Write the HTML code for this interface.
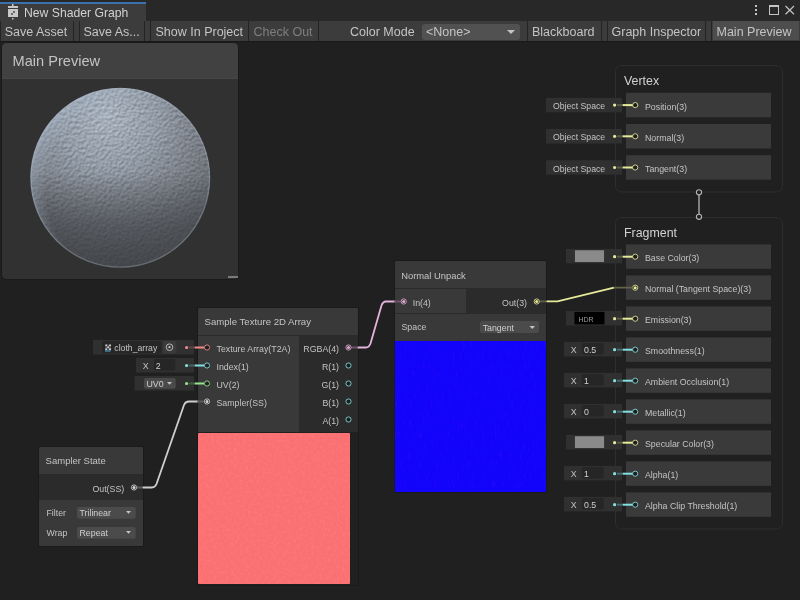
<!DOCTYPE html>
<html><head><meta charset="utf-8"><title>Shader Graph</title>
<style>
html,body{margin:0;padding:0;background:#202020;width:800px;height:600px;overflow:hidden}
svg{display:block;font-family:"Liberation Sans", sans-serif;will-change:transform}
</style></head><body>
<svg width="800" height="600" viewBox="0 0 800 600">
<rect x="0" y="0" width="800" height="600" fill="#202020"/>
<rect x="0" y="0" width="800" height="21" fill="#282828" />
<rect x="0" y="2" width="146" height="19" fill="#3c3c3c" />
<rect x="0" y="2" width="146" height="2" fill="#3a72b0" />
<rect x="12" y="4" width="1.5" height="2" fill="#c8c8c8" />
<rect x="8" y="6" width="10" height="2" fill="#c8c8c8" />
<rect x="8" y="9" width="10" height="8" fill="#c8c8c8" />
<rect x="11.25" y="13.25" width="1.5" height="1.5" fill="#222" />
<rect x="13.25" y="11.25" width="1.5" height="1.5" fill="#222" />
<rect x="12" y="18" width="1.5" height="1.5" fill="#c8c8c8" />
<text x="24" y="16.5" font-size="12.2" fill="#d2d2d2" text-anchor="start" >New Shader Graph</text>
<rect x="755" y="5" width="2" height="2" fill="#c4c4c4" />
<rect x="755" y="9" width="2" height="2" fill="#c4c4c4" />
<rect x="755" y="13" width="2" height="2" fill="#c4c4c4" />
<rect x="769.5" y="5.5" width="9" height="9" fill="none" stroke="#c4c4c4" stroke-width="1"/>
<rect x="769" y="5" width="10" height="2" fill="#c4c4c4" />
<path d="M785.5 6 L794 14.3 M794 6 L785.5 14.3" stroke="#c4c4c4" stroke-width="1.2"/>
<rect x="0" y="21" width="800" height="20" fill="#3c3c3c" />
<rect x="0" y="41" width="800" height="1" fill="#191919" />
<rect x="0" y="21" width="1" height="20" fill="#242424" />
<rect x="73" y="21" width="1" height="20" fill="#242424" />
<rect x="79" y="21" width="1" height="20" fill="#242424" />
<rect x="144" y="21" width="1" height="20" fill="#242424" />
<rect x="150" y="21" width="1" height="20" fill="#242424" />
<rect x="248" y="21" width="1" height="20" fill="#242424" />
<rect x="318" y="21" width="1" height="20" fill="#242424" />
<rect x="527" y="21" width="1" height="20" fill="#242424" />
<rect x="601" y="21" width="1" height="20" fill="#242424" />
<rect x="607" y="21" width="1" height="20" fill="#242424" />
<rect x="705" y="21" width="1" height="20" fill="#242424" />
<rect x="711" y="21" width="1" height="20" fill="#242424" />
<rect x="713" y="21" width="86" height="19" fill="#4d4d4d" />
<text x="4.75" y="36" font-size="12.5" fill="#c4c4c4" text-anchor="start" >Save Asset</text>
<text x="83.5" y="36" font-size="12.5" fill="#c4c4c4" text-anchor="start" >Save As...</text>
<text x="155.5" y="36" font-size="12.5" fill="#c4c4c4" text-anchor="start" >Show In Project</text>
<text x="253.5" y="36" font-size="12.5" fill="#7f7f7f" text-anchor="start" >Check Out</text>
<text x="350" y="36" font-size="12.5" fill="#c4c4c4" text-anchor="start" >Color Mode</text>
<rect x="422" y="24" width="98" height="16" fill="#515151" rx="3" />
<text x="426" y="36" font-size="12.5" fill="#c4c4c4" text-anchor="start" >&lt;None&gt;</text>
<path d="M507 30 L515 30 L511 34 Z" fill="#c4c4c4"/>
<text x="532" y="36" font-size="12.5" fill="#c4c4c4" text-anchor="start" >Blackboard</text>
<text x="611.5" y="36" font-size="12.5" fill="#c4c4c4" text-anchor="start" >Graph Inspector</text>
<text x="716.5" y="36" font-size="12.5" fill="#c4c4c4" text-anchor="start" >Main Preview</text>
<rect x="1.5" y="42.5" width="237" height="237" rx="5" fill="#313131" stroke="#1a1a1a" stroke-width="1"/>
<path d="M2 79 V48 Q2 43 7 43 H233 Q238 43 238 48 V79 Z" fill="#414141"/>
<rect x="2" y="78" width="236" height="1" fill="#464646" />
<text x="12.5" y="65.8" font-size="14.6" fill="#c4c4c4" text-anchor="start" >Main Preview</text>
<defs>
<radialGradient id="sphlin" cx="115" cy="130" r="165" fx="104" fy="112" gradientUnits="userSpaceOnUse">
<stop offset="0" stop-color="#a2acb8"/>
<stop offset="0.3" stop-color="#919aa5"/>
<stop offset="0.55" stop-color="#7a7f87"/>
<stop offset="0.8" stop-color="#5f6267"/>
<stop offset="1" stop-color="#505256"/>
</radialGradient>
<radialGradient id="hl" cx="112" cy="122" r="60" gradientUnits="userSpaceOnUse">
<stop offset="0" stop-color="#dfe7f0" stop-opacity="0.10"/>
<stop offset="1" stop-color="#dfe7f0" stop-opacity="0"/>
</radialGradient>
<linearGradient id="shade" x1="0" y1="172" x2="0" y2="268" gradientUnits="userSpaceOnUse">
<stop offset="0" stop-color="#3a3c40" stop-opacity="0"/>
<stop offset="0.55" stop-color="#3a3c40" stop-opacity="0.5"/>
<stop offset="1" stop-color="#3a3c40" stop-opacity="0.68"/>
</linearGradient>
<radialGradient id="rim" cx="140" cy="190" r="114" gradientUnits="userSpaceOnUse">
<stop offset="0.82" stop-color="#aebfd4" stop-opacity="0"/>
<stop offset="0.95" stop-color="#aebfd4" stop-opacity="0.3"/>
<stop offset="1" stop-color="#b8c8dc" stop-opacity="0.5"/>
</radialGradient>
<clipPath id="sphclip"><circle cx="120.3" cy="177.8" r="90"/></clipPath>
<filter id="bump" x="25" y="82" width="190" height="190" filterUnits="userSpaceOnUse" color-interpolation-filters="sRGB">
<feTurbulence type="fractalNoise" baseFrequency="0.35" numOctaves="2" seed="7" result="t"/>
<feColorMatrix in="t" type="matrix" values="0 0 0 0 0  0 0 0 0 0  0 0 0 0 0  1 0 0 0 0" result="a"/>
<feDiffuseLighting in="a" surfaceScale="1.8" diffuseConstant="1.0" lighting-color="#ffffff" result="l">
<feDistantLight azimuth="240" elevation="30"/>
</feDiffuseLighting>
<feComposite in="SourceGraphic" in2="l" operator="arithmetic" k1="0.32" k2="0.84" k3="0" k4="0" result="c"/>
<feComposite in="c" in2="SourceGraphic" operator="in"/>
</filter>
<filter id="grainB" x="395" y="341" width="151" height="151" filterUnits="userSpaceOnUse" color-interpolation-filters="sRGB">
<feTurbulence type="fractalNoise" baseFrequency="0.6 0.1" numOctaves="2" seed="5"/>
<feColorMatrix type="matrix" values="0 0 0 0 0.4  0 0 0 0 0.05  0 0 0 0 0.95  0.9 0 0 0 -0.55"/>
</filter>
<filter id="grainP" x="198" y="433" width="152" height="151" filterUnits="userSpaceOnUse" color-interpolation-filters="sRGB">
<feTurbulence type="fractalNoise" baseFrequency="0.35" numOctaves="2" seed="9"/>
<feColorMatrix type="matrix" values="0 0 0 0 1  0 0 0 0 0.55  0 0 0 0 0.56  0.8 0 0 0 -0.35"/>
</filter>
<filter id="grain" x="0" y="0" width="100%" height="100%">
<feTurbulence type="fractalNoise" baseFrequency="0.6 0.25" numOctaves="2" seed="11"/>
<feColorMatrix type="matrix" values="0 0 0 0 1  0 0 0 0 1  0 0 0 0 1  0 0 0 0.9 -0.35"/>
</filter>
</defs>
<g filter="url(#bump)">
<circle cx="120.3" cy="177.8" r="90" fill="url(#sphlin)"/>
<circle cx="120.3" cy="177.8" r="90" fill="url(#hl)"/>
</g>
<circle cx="120.3" cy="177.8" r="90" fill="url(#shade)"/>
<circle cx="120.3" cy="177.8" r="90" fill="url(#rim)"/>
<circle cx="120.3" cy="177.8" r="89.3" fill="none" stroke="#a9b5c4" stroke-width="1.4" opacity="0.35"/>
<rect x="228" y="276" width="10" height="2" fill="#7a7a7a" />
<rect x="615.5" y="65.5" width="167" height="126.5" rx="6" fill="#202020" stroke="#2e2e2e" stroke-width="1"/>
<text x="624" y="84.5" font-size="12.4" fill="#d2d2d2" text-anchor="start" >Vertex</text>
<rect x="615.5" y="217.5" width="167" height="311.5" rx="6" fill="#202020" stroke="#2e2e2e" stroke-width="1"/>
<text x="624" y="236.5" font-size="12.4" fill="#d2d2d2" text-anchor="start" >Fragment</text>
<line x1="699" y1="192" x2="699" y2="217" stroke="#b4b4b4" stroke-width="1.3" />
<circle cx="699" cy="192.3" r="2.6" fill="#202020" stroke="#b4b4b4" stroke-width="1.1"/>
<circle cx="699" cy="216.8" r="2.6" fill="#202020" stroke="#b4b4b4" stroke-width="1.1"/>
<rect x="626" y="92.8" width="145" height="24.5" fill="#3a3a3a" />
<text x="645" y="109.6" font-size="8.8" fill="#c4c4c4" text-anchor="start" >Position(3)</text>
<rect x="546" y="97.8" width="76" height="14.5" fill="#303030" />
<circle cx="614.6" cy="105.1" r="1.6" fill="#e6ea9a"/>
<rect x="617" y="104.1" width="5" height="2" fill="#5a5a48" />
<rect x="622.5" y="104.1" width="10.5" height="2" fill="#e6ea9a" />
<text x="553" y="109.1" font-size="8.7" fill="#c4c4c4" text-anchor="start" >Object Space</text>
<circle cx="635.2" cy="105.1" r="2.6" fill="#1e1e1e" stroke="#e6ea9a" stroke-width="1.0" stroke-opacity="0.85"/>
<rect x="626" y="124.0" width="145" height="24.5" fill="#3a3a3a" />
<text x="645" y="140.8" font-size="8.8" fill="#c4c4c4" text-anchor="start" >Normal(3)</text>
<rect x="546" y="129.0" width="76" height="14.5" fill="#303030" />
<circle cx="614.6" cy="136.3" r="1.6" fill="#e6ea9a"/>
<rect x="617" y="135.3" width="5" height="2" fill="#5a5a48" />
<rect x="622.5" y="135.3" width="10.5" height="2" fill="#e6ea9a" />
<text x="553" y="140.3" font-size="8.7" fill="#c4c4c4" text-anchor="start" >Object Space</text>
<circle cx="635.2" cy="136.3" r="2.6" fill="#1e1e1e" stroke="#e6ea9a" stroke-width="1.0" stroke-opacity="0.85"/>
<rect x="626" y="155.2" width="145" height="24.5" fill="#3a3a3a" />
<text x="645" y="172.0" font-size="8.8" fill="#c4c4c4" text-anchor="start" >Tangent(3)</text>
<rect x="546" y="160.2" width="76" height="14.5" fill="#303030" />
<circle cx="614.6" cy="167.5" r="1.6" fill="#e6ea9a"/>
<rect x="617" y="166.5" width="5" height="2" fill="#5a5a48" />
<rect x="622.5" y="166.5" width="10.5" height="2" fill="#e6ea9a" />
<text x="553" y="171.5" font-size="8.7" fill="#c4c4c4" text-anchor="start" >Object Space</text>
<circle cx="635.2" cy="167.5" r="2.6" fill="#1e1e1e" stroke="#e6ea9a" stroke-width="1.0" stroke-opacity="0.85"/>
<rect x="626" y="244.4" width="145" height="24.4" fill="#3a3a3a" />
<text x="645" y="261.2" font-size="8.8" fill="#c4c4c4" text-anchor="start" >Base Color(3)</text>
<rect x="566" y="248.9" width="56" height="14.5" fill="#303030" />
<circle cx="614.6" cy="256.7" r="1.6" fill="#e6ea9a"/>
<rect x="617" y="255.7" width="5" height="2" fill="#5a5a48" />
<rect x="622.5" y="255.7" width="10.5" height="2" fill="#e6ea9a" />
<rect x="574.5" y="249.9" width="30" height="12.5" fill="#8a8a8a" stroke="#1c1c1c" stroke-width="0.6"/>
<circle cx="635.2" cy="256.7" r="2.6" fill="#1e1e1e" stroke="#e6ea9a" stroke-width="1.0" stroke-opacity="0.85"/>
<rect x="626" y="275.4" width="145" height="24.4" fill="#3a3a3a" />
<text x="645" y="292.2" font-size="8.8" fill="#c4c4c4" text-anchor="start" >Normal (Tangent Space)(3)</text>
<circle cx="635.2" cy="287.7" r="2.6" fill="#1e1e1e" stroke="#e6ea9a" stroke-width="1.0" stroke-opacity="0.85"/>
<circle cx="635.2" cy="287.7" r="1.5" fill="#e6ea9a"/>
<rect x="626" y="306.4" width="145" height="24.4" fill="#3a3a3a" />
<text x="645" y="323.2" font-size="8.8" fill="#c4c4c4" text-anchor="start" >Emission(3)</text>
<rect x="566" y="310.9" width="56" height="14.5" fill="#303030" />
<circle cx="614.6" cy="318.7" r="1.6" fill="#e6ea9a"/>
<rect x="617" y="317.7" width="5" height="2" fill="#5a5a48" />
<rect x="622.5" y="317.7" width="10.5" height="2" fill="#e6ea9a" />
<rect x="574.5" y="311.9" width="30" height="12.5" fill="#000000" />
<text x="578.5" y="321.9" font-size="7" fill="#9a9a9a" text-anchor="start" >HDR</text>
<circle cx="635.2" cy="318.7" r="2.6" fill="#1e1e1e" stroke="#e6ea9a" stroke-width="1.0" stroke-opacity="0.85"/>
<rect x="626" y="337.4" width="145" height="24.4" fill="#3a3a3a" />
<text x="645" y="354.2" font-size="8.8" fill="#c4c4c4" text-anchor="start" >Smoothness(1)</text>
<rect x="564" y="341.9" width="58" height="14.5" fill="#303030" />
<circle cx="614.6" cy="349.7" r="1.6" fill="#84dfe2"/>
<rect x="617" y="348.7" width="5" height="2" fill="#4a6a6a" />
<rect x="622.5" y="348.7" width="10.5" height="2" fill="#84dfe2" />
<text x="570.7" y="353.4" font-size="8.8" fill="#c4c4c4" text-anchor="start" >X</text>
<rect x="581.7" y="342.9" width="22" height="11.5" fill="#262626" rx="2" />
<text x="584" y="352.9" font-size="8.8" fill="#d0d0d0" text-anchor="start" >0.5</text>
<circle cx="635.2" cy="349.7" r="2.6" fill="#1e1e1e" stroke="#84dfe2" stroke-width="1.0" stroke-opacity="0.85"/>
<rect x="626" y="368.4" width="145" height="24.4" fill="#3a3a3a" />
<text x="645" y="385.2" font-size="8.8" fill="#c4c4c4" text-anchor="start" >Ambient Occlusion(1)</text>
<rect x="564" y="372.9" width="58" height="14.5" fill="#303030" />
<circle cx="614.6" cy="380.7" r="1.6" fill="#84dfe2"/>
<rect x="617" y="379.7" width="5" height="2" fill="#4a6a6a" />
<rect x="622.5" y="379.7" width="10.5" height="2" fill="#84dfe2" />
<text x="570.7" y="384.4" font-size="8.8" fill="#c4c4c4" text-anchor="start" >X</text>
<rect x="581.7" y="373.9" width="22" height="11.5" fill="#262626" rx="2" />
<text x="584" y="383.9" font-size="8.8" fill="#d0d0d0" text-anchor="start" >1</text>
<circle cx="635.2" cy="380.7" r="2.6" fill="#1e1e1e" stroke="#84dfe2" stroke-width="1.0" stroke-opacity="0.85"/>
<rect x="626" y="399.4" width="145" height="24.4" fill="#3a3a3a" />
<text x="645" y="416.2" font-size="8.8" fill="#c4c4c4" text-anchor="start" >Metallic(1)</text>
<rect x="564" y="403.9" width="58" height="14.5" fill="#303030" />
<circle cx="614.6" cy="411.7" r="1.6" fill="#84dfe2"/>
<rect x="617" y="410.7" width="5" height="2" fill="#4a6a6a" />
<rect x="622.5" y="410.7" width="10.5" height="2" fill="#84dfe2" />
<text x="570.7" y="415.4" font-size="8.8" fill="#c4c4c4" text-anchor="start" >X</text>
<rect x="581.7" y="404.9" width="22" height="11.5" fill="#262626" rx="2" />
<text x="584" y="414.9" font-size="8.8" fill="#d0d0d0" text-anchor="start" >0</text>
<circle cx="635.2" cy="411.7" r="2.6" fill="#1e1e1e" stroke="#84dfe2" stroke-width="1.0" stroke-opacity="0.85"/>
<rect x="626" y="430.4" width="145" height="24.4" fill="#3a3a3a" />
<text x="645" y="447.2" font-size="8.8" fill="#c4c4c4" text-anchor="start" >Specular Color(3)</text>
<rect x="566" y="434.9" width="56" height="14.5" fill="#303030" />
<circle cx="614.6" cy="442.7" r="1.6" fill="#e6ea9a"/>
<rect x="617" y="441.7" width="5" height="2" fill="#5a5a48" />
<rect x="622.5" y="441.7" width="10.5" height="2" fill="#e6ea9a" />
<rect x="574.5" y="435.9" width="30" height="12.5" fill="#8a8a8a" stroke="#1c1c1c" stroke-width="0.6"/>
<circle cx="635.2" cy="442.7" r="2.6" fill="#1e1e1e" stroke="#e6ea9a" stroke-width="1.0" stroke-opacity="0.85"/>
<rect x="626" y="461.4" width="145" height="24.4" fill="#3a3a3a" />
<text x="645" y="478.2" font-size="8.8" fill="#c4c4c4" text-anchor="start" >Alpha(1)</text>
<rect x="564" y="465.9" width="58" height="14.5" fill="#303030" />
<circle cx="614.6" cy="473.7" r="1.6" fill="#84dfe2"/>
<rect x="617" y="472.7" width="5" height="2" fill="#4a6a6a" />
<rect x="622.5" y="472.7" width="10.5" height="2" fill="#84dfe2" />
<text x="570.7" y="477.4" font-size="8.8" fill="#c4c4c4" text-anchor="start" >X</text>
<rect x="581.7" y="466.9" width="22" height="11.5" fill="#262626" rx="2" />
<text x="584" y="476.9" font-size="8.8" fill="#d0d0d0" text-anchor="start" >1</text>
<circle cx="635.2" cy="473.7" r="2.6" fill="#1e1e1e" stroke="#84dfe2" stroke-width="1.0" stroke-opacity="0.85"/>
<rect x="626" y="492.4" width="145" height="24.4" fill="#3a3a3a" />
<text x="645" y="509.2" font-size="8.8" fill="#c4c4c4" text-anchor="start" >Alpha Clip Threshold(1)</text>
<rect x="564" y="496.9" width="58" height="14.5" fill="#303030" />
<circle cx="614.6" cy="504.7" r="1.6" fill="#84dfe2"/>
<rect x="617" y="503.7" width="5" height="2" fill="#4a6a6a" />
<rect x="622.5" y="503.7" width="10.5" height="2" fill="#84dfe2" />
<text x="570.7" y="508.4" font-size="8.8" fill="#c4c4c4" text-anchor="start" >X</text>
<rect x="581.7" y="497.9" width="22" height="11.5" fill="#262626" rx="2" />
<text x="584" y="507.9" font-size="8.8" fill="#d0d0d0" text-anchor="start" >0.5</text>
<circle cx="635.2" cy="504.7" r="2.6" fill="#1e1e1e" stroke="#84dfe2" stroke-width="1.0" stroke-opacity="0.85"/>
<rect x="395" y="261" width="151" height="27" fill="#393939" />
<text x="401.2" y="278.7" font-size="9.4" fill="#c4c4c4" text-anchor="start" >Normal Unpack</text>
<rect x="395" y="288" width="151" height="1" fill="#2a2a2a" />
<rect x="395" y="289" width="71" height="25" fill="#393939" />
<rect x="466" y="289" width="80" height="25" fill="#2b2b2b" />
<rect x="395" y="313" width="151" height="1" fill="#2a2a2a" />
<rect x="395" y="314" width="151" height="27" fill="#393939" />
<text x="412.7" y="306" font-size="8.8" fill="#c4c4c4" text-anchor="start" >In(4)</text>
<text x="527" y="306" font-size="8.8" fill="#c4c4c4" text-anchor="end" >Out(3)</text>
<text x="401.5" y="330" font-size="8.8" fill="#c4c4c4" text-anchor="start" >Space</text>
<rect x="480" y="321" width="59" height="12" fill="#4b4b4b" rx="2" />
<text x="482.7" y="330.5" font-size="8.8" fill="#d0d0d0" text-anchor="start" >Tangent</text>
<path d="M529.5 326 L535 326 L532.25 329 Z" fill="#c4c4c4"/>
<rect x="395" y="341" width="151" height="151" fill="#1204fa" />
<rect x="395" y="341" width="151" height="151" filter="url(#grainB)"/>
<rect x="394.5" y="260.5" width="152" height="232" rx="1.5" fill="none" stroke="#1a1a1a" stroke-width="1"/>
<rect x="198" y="308" width="160" height="27" fill="#393939" />
<text x="204.5" y="324.5" font-size="9.6" fill="#c4c4c4" text-anchor="start" >Sample Texture 2D Array</text>
<rect x="198" y="335" width="160" height="1" fill="#2a2a2a" />
<rect x="198" y="336" width="101" height="96" fill="#393939" />
<rect x="299" y="336" width="59" height="96" fill="#2b2b2b" />
<text x="216.5" y="351.9" font-size="8.8" fill="#c4c4c4" text-anchor="start" >Texture Array(T2A)</text>
<text x="216.5" y="369.9" font-size="8.8" fill="#c4c4c4" text-anchor="start" >Index(1)</text>
<text x="216.5" y="387.9" font-size="8.8" fill="#c4c4c4" text-anchor="start" >UV(2)</text>
<text x="216.5" y="405.9" font-size="8.8" fill="#c4c4c4" text-anchor="start" >Sampler(SS)</text>
<text x="339" y="351.9" font-size="8.8" fill="#c4c4c4" text-anchor="end" >RGBA(4)</text>
<text x="339" y="369.9" font-size="8.8" fill="#c4c4c4" text-anchor="end" >R(1)</text>
<text x="339" y="387.9" font-size="8.8" fill="#c4c4c4" text-anchor="end" >G(1)</text>
<text x="339" y="405.9" font-size="8.8" fill="#c4c4c4" text-anchor="end" >B(1)</text>
<text x="339" y="423.9" font-size="8.8" fill="#c4c4c4" text-anchor="end" >A(1)</text>
<rect x="198" y="433" width="152" height="151" fill="#fb7072" rx="1" />
<rect x="198" y="433" width="152" height="151" filter="url(#grainP)"/>
<rect x="197.5" y="307.5" width="161" height="278" rx="1.5" fill="none" stroke="#1a1a1a" stroke-width="1"/>
<rect x="93" y="340" width="101" height="14.5" fill="#303030" />
<rect x="102" y="341" width="59.5" height="12.5" fill="#262626" rx="2" />
<rect x="105.3" y="344.5" width="1.9" height="1.9" fill="#d0d0d0" />
<rect x="105.3" y="346.4" width="1.9" height="1.9" fill="#555555" />
<rect x="105.3" y="348.3" width="1.9" height="1.9" fill="#d0d0d0" />
<rect x="107.2" y="344.5" width="1.9" height="1.9" fill="#555555" />
<rect x="107.2" y="346.4" width="1.9" height="1.9" fill="#d0d0d0" />
<rect x="107.2" y="348.3" width="1.9" height="1.9" fill="#555555" />
<rect x="109.1" y="344.5" width="1.9" height="1.9" fill="#d0d0d0" />
<rect x="109.1" y="346.4" width="1.9" height="1.9" fill="#555555" />
<rect x="109.1" y="348.3" width="1.9" height="1.9" fill="#d0d0d0" />
<rect x="105" y="350.5" width="5.5" height="1" fill="#4aa8e0" />
<text x="114.3" y="350.5" font-size="8.7" fill="#c4c4c4" text-anchor="start" >cloth_array</text>
<rect x="162.7" y="341" width="13.7" height="12.5" fill="#3a3a3a" rx="2" />
<circle cx="169.5" cy="347.2" r="3.3" fill="none" stroke="#c4c4c4" stroke-width="0.9"/><circle cx="169.5" cy="347.2" r="1.1" fill="#c4c4c4"/>
<rect x="136" y="358" width="58" height="14.5" fill="#303030" />
<text x="142.7" y="369" font-size="8.8" fill="#c4c4c4" text-anchor="start" >X</text>
<rect x="154" y="359" width="21.2" height="11.5" fill="#262626" rx="2" />
<text x="155.8" y="368.5" font-size="8.8" fill="#d0d0d0" text-anchor="start" >2</text>
<rect x="134.6" y="376" width="59.4" height="14.5" fill="#303030" />
<rect x="144" y="378" width="31.7" height="10.7" fill="#4a4a4a" rx="2" />
<text x="146.5" y="386.8" font-size="8.8" fill="#d0d0d0" text-anchor="start" >UV0</text>
<path d="M167 382 L172 382 L169.5 384.8 Z" fill="#c4c4c4"/>
<circle cx="186.6" cy="347.5" r="1.6" fill="#f08a8a"/>
<rect x="189" y="346.5" width="5" height="2" fill="#5a4646" />
<rect x="194.5" y="346.5" width="10" height="2" fill="#f08a8a" />
<circle cx="186.6" cy="365.5" r="1.6" fill="#84dfe2"/>
<rect x="189" y="364.5" width="5" height="2" fill="#466060" />
<rect x="194.5" y="364.5" width="10" height="2" fill="#84dfe2" />
<circle cx="186.6" cy="383.5" r="1.6" fill="#95e48d"/>
<rect x="189" y="382.5" width="5" height="2" fill="#466046" />
<rect x="194.5" y="382.5" width="10" height="2" fill="#95e48d" />
<rect x="39" y="447" width="104" height="27" fill="#393939" />
<text x="45.6" y="464.4" font-size="9.5" fill="#c4c4c4" text-anchor="start" >Sampler State</text>
<rect x="39" y="474" width="104" height="26" fill="#2b2b2b" />
<text x="124.2" y="491.5" font-size="8.8" fill="#c4c4c4" text-anchor="end" >Out(SS)</text>
<rect x="39" y="500" width="104" height="46" fill="#393939" />
<text x="46.5" y="516" font-size="8.8" fill="#c4c4c4" text-anchor="start" >Filter</text>
<rect x="77" y="507" width="58.7" height="11.7" fill="#4b4b4b" rx="2" />
<text x="79.5" y="516" font-size="8.8" fill="#d0d0d0" text-anchor="start" >Trilinear</text>
<path d="M126 511 L131 511 L128.5 513.8 Z" fill="#c4c4c4"/>
<text x="46.5" y="535.5" font-size="8.8" fill="#c4c4c4" text-anchor="start" >Wrap</text>
<rect x="77" y="527" width="58.7" height="11.7" fill="#4b4b4b" rx="2" />
<text x="79.5" y="536" font-size="8.8" fill="#d0d0d0" text-anchor="start" >Repeat</text>
<path d="M126 531 L131 531 L128.5 533.8 Z" fill="#c4c4c4"/>
<rect x="38.5" y="446.5" width="105" height="100" rx="1.5" fill="none" stroke="#1a1a1a" stroke-width="1"/>
<path d="M352 347.5 H358" fill="none" stroke="#6a5268" stroke-width="1.8" stroke-linecap="round" stroke-linejoin="round"/>
<path d="M358.5 347.5 H366 Q369 347.5 370.5 343.5 L381.5 305.5 Q383 301.5 386 301.5 H394.5" fill="none" stroke="#e6b2dc" stroke-width="1.8" stroke-linecap="round" stroke-linejoin="round"/>
<path d="M395 301.5 H400" fill="none" stroke="#6a5268" stroke-width="1.8" stroke-linecap="round" stroke-linejoin="round"/>
<path d="M137 487.5 H143" fill="none" stroke="#5c5c5c" stroke-width="1.8" stroke-linecap="round" stroke-linejoin="round"/>
<path d="M143.5 487.5 H152 Q155 487.5 156.5 484 L184 405 Q185.5 401.5 189 401.5 H197.5" fill="none" stroke="#cfcfcf" stroke-width="1.8" stroke-linecap="round" stroke-linejoin="round"/>
<path d="M198 401.5 H203" fill="none" stroke="#5c5c5c" stroke-width="1.8" stroke-linecap="round" stroke-linejoin="round"/>
<path d="M540 301.4 H546" fill="none" stroke="#5e604a" stroke-width="1.8" stroke-linecap="round" stroke-linejoin="round"/>
<path d="M546.5 301.4 H557.5 L614 287.7" fill="none" stroke="#e6ea9a" stroke-width="1.8" stroke-linecap="butt" stroke-linejoin="miter"/>
<path d="M614.5 287.7 H632" fill="none" stroke="#62644a" stroke-width="1.8" stroke-linecap="round" stroke-linejoin="round"/>
<circle cx="403.7" cy="301.5" r="2.6" fill="#1e1e1e" stroke="#e6b2dc" stroke-width="1.0" stroke-opacity="0.85"/>
<circle cx="403.7" cy="301.5" r="1.5" fill="#e6b2dc"/>
<circle cx="536.7" cy="301.5" r="2.6" fill="#1e1e1e" stroke="#e6ea9a" stroke-width="1.0" stroke-opacity="0.85"/>
<circle cx="536.7" cy="301.5" r="1.5" fill="#e6ea9a"/>
<circle cx="207" cy="347.5" r="2.6" fill="#1e1e1e" stroke="#f08a8a" stroke-width="1.0" stroke-opacity="0.85"/>
<circle cx="207" cy="365.5" r="2.6" fill="#1e1e1e" stroke="#84dfe2" stroke-width="1.0" stroke-opacity="0.85"/>
<circle cx="207" cy="383.5" r="2.6" fill="#1e1e1e" stroke="#95e48d" stroke-width="1.0" stroke-opacity="0.85"/>
<circle cx="207" cy="401.5" r="2.6" fill="#1e1e1e" stroke="#d8d8d8" stroke-width="1.0" stroke-opacity="0.85"/>
<circle cx="207" cy="401.5" r="1.5" fill="#d8d8d8"/>
<circle cx="348.5" cy="347.5" r="2.6" fill="#1e1e1e" stroke="#e6b2dc" stroke-width="1.0" stroke-opacity="0.85"/>
<circle cx="348.5" cy="347.5" r="1.5" fill="#e6b2dc"/>
<circle cx="348.5" cy="365.5" r="2.6" fill="#1e1e1e" stroke="#84dfe2" stroke-width="1.0" stroke-opacity="0.85"/>
<circle cx="348.5" cy="383.5" r="2.6" fill="#1e1e1e" stroke="#84dfe2" stroke-width="1.0" stroke-opacity="0.85"/>
<circle cx="348.5" cy="401.5" r="2.6" fill="#1e1e1e" stroke="#84dfe2" stroke-width="1.0" stroke-opacity="0.85"/>
<circle cx="348.5" cy="419.5" r="2.6" fill="#1e1e1e" stroke="#84dfe2" stroke-width="1.0" stroke-opacity="0.85"/>
<circle cx="134" cy="487.5" r="2.6" fill="#1e1e1e" stroke="#d8d8d8" stroke-width="1.0" stroke-opacity="0.85"/>
<circle cx="134" cy="487.5" r="1.5" fill="#d8d8d8"/>
</svg>
</body></html>
